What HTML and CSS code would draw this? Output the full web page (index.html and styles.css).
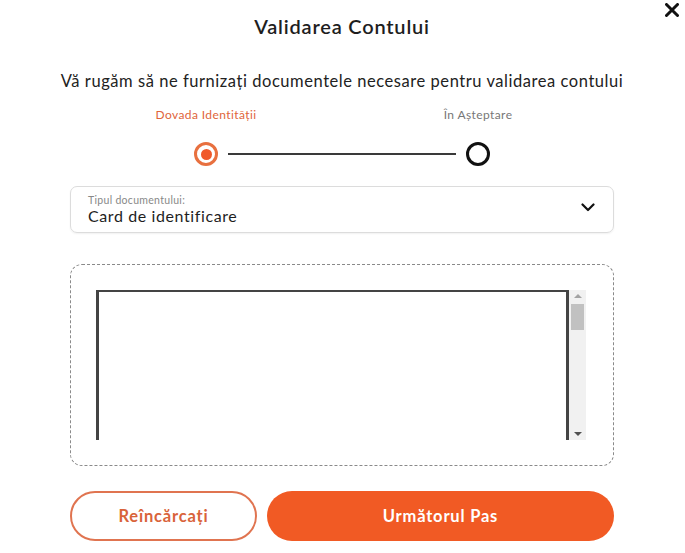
FILE: index.html
```html
<!DOCTYPE html>
<html lang="ro">
<head>
<meta charset="utf-8">
<title>Validarea Contului</title>
<link rel="stylesheet" href="styles.css">
</head>
<body>
<div class="modal">
  <button class="close" aria-label="Închide">
    <svg width="14" height="14" viewBox="0 0 14 14"><path d="M1.5 1.5 L12.5 12.5 M12.5 1.5 L1.5 12.5" stroke="#111" stroke-width="3" stroke-linecap="round"/></svg>
  </button>
  <h1 class="title">Validarea Contului</h1>
  <p class="subtitle">Vă rugăm să ne furnizați documentele necesare pentru validarea contului</p>

  <div class="stepper">
    <div class="step">
      <span class="step-label active">Dovada Identității</span>
      <span class="dot dot-active"><span class="dot-inner"></span></span>
    </div>
    <div class="step-line"></div>
    <div class="step">
      <span class="step-label">În Așteptare</span>
      <span class="dot"></span>
    </div>
  </div>

  <div class="select">
    <div class="select-text">
      <span class="select-label">Tipul documentului:</span>
      <span class="select-value">Card de identificare</span>
    </div>
    <svg class="chev" width="14" height="9" viewBox="0 0 14 9"><path d="M1.5 1.5 L7 7 L12.5 1.5" fill="none" stroke="#111" stroke-width="2.2" stroke-linecap="round" stroke-linejoin="round"/></svg>
  </div>

  <div class="upload">
    <div class="frame">
      <div class="doc"></div>
      <div class="scrollbar">
        <span class="arrow up"></span>
        <span class="thumb"></span>
        <span class="track"></span>
        <span class="arrow down"></span>
      </div>
    </div>
  </div>

  <div class="actions">
    <button class="btn btn-outline">Reîncărcați</button>
    <button class="btn btn-fill">Următorul Pas</button>
  </div>
</div>
</body>
</html>
```

FILE: styles.css
```css
* { box-sizing: border-box; }
html, body { margin: 0; padding: 0; background: #fff; }
body { font-family: "Lato", "Noto Sans", sans-serif; color: #222; }

.modal {
  position: relative;
  width: 685px;
  height: 553px;
  padding: 0 71px 0 70px;
  display: flex;
  flex-direction: column;
}

.close {
  position: absolute;
  top: 3px;
  right: 6px;
  border: 0;
  background: none;
  padding: 0;
  width: 14px;
  height: 14px;
  display: flex;
}

.title {
  margin: 14px 0 0;
  text-align: center;
  font-size: 20px;
  font-weight: 600;
  line-height: 24px;
  letter-spacing: 0.8px;
  color: #1e1e1e;
}

.subtitle {
  margin: 33px -20px 0;
  text-align: center;
  font-size: 16.5px;
  line-height: 20px;
  color: #222;
  letter-spacing: 0.55px;
}

.stepper {
  margin: 17px auto 0;
  width: 296px;
  display: flex;
  align-items: flex-end;
}
.step {
  width: 24px;
  display: flex;
  flex-direction: column;
  align-items: center;
  gap: 20px;
}
.step-label {
  white-space: nowrap;
  font-size: 12px;
  line-height: 14px;
  letter-spacing: 0.4px;
  color: #777;
}
.step-label.active { color: #e0643a; }
.dot {
  width: 24px;
  height: 24px;
  border-radius: 50%;
  border: 3px solid #111;
  display: flex;
  align-items: center;
  justify-content: center;
}
.dot-active { border-color: #e8703f; }
.dot-inner {
  width: 11px;
  height: 11px;
  border-radius: 50%;
  background: #f0582a;
}
.step-line {
  flex: 1;
  height: 2px;
  background: #3a3a3a;
  margin: 0 10px 11px;
}

.select {
  margin-top: 20px;
  height: 47px;
  border: 1px solid #dcdcdc;
  border-radius: 7px;
  box-shadow: 0 1px 2px rgba(0,0,0,0.06);
  display: flex;
  align-items: center;
  padding: 0 18px 0 17px;
}
.select-text {
  flex: 1;
  display: flex;
  flex-direction: column;
}
.select-label {
  font-size: 10.5px;
  line-height: 12px;
  color: #888;
  letter-spacing: 0.3px;
}
.select-value {
  font-size: 16px;
  line-height: 20px;
  color: #1e1e1e;
  letter-spacing: 0.6px;
}
.chev { margin-top: -4px; }

.upload {
  margin-top: 31px;
  height: 202px;
  border: 1px dashed #8a8a8a;
  border-radius: 12px;
  padding: 25px 27px 25px 25px;
  display: flex;
}
.frame {
  flex: 1;
  display: flex;
}
.doc {
  flex: 1;
  border: 3px solid #444;
  border-top-width: 2px;
  border-bottom: 0;
}
.scrollbar {
  width: 17px;
  background: #f1f1f1;
  display: flex;
  flex-direction: column;
  align-items: center;
  padding: 4px 0;
}
.arrow {
  width: 0;
  height: 0;
  border-left: 4px solid transparent;
  border-right: 4px solid transparent;
}
.arrow.up { border-bottom: 4px solid #a3a3a3; }
.arrow.down { border-top: 4px solid #505050; }
.thumb {
  margin-top: 6px;
  width: 13px;
  height: 26px;
  background: #c1c1c1;
}
.track { flex: 1; }

.actions {
  margin-top: 25px;
  display: flex;
  gap: 10px;
}
.btn {
  height: 50px;
  border-radius: 25px;
  font-family: "Lato", "Noto Sans", sans-serif;
  font-size: 16.5px;
  font-weight: 700;
  letter-spacing: 0.8px;
}
.btn-outline {
  width: 187px;
  background: #fff;
  color: #d9633a;
  border: 2px solid #e07450;
}
.btn-fill {
  flex: 1;
  background: #f15a24;
  color: #fff;
  border: 0;
}
```
